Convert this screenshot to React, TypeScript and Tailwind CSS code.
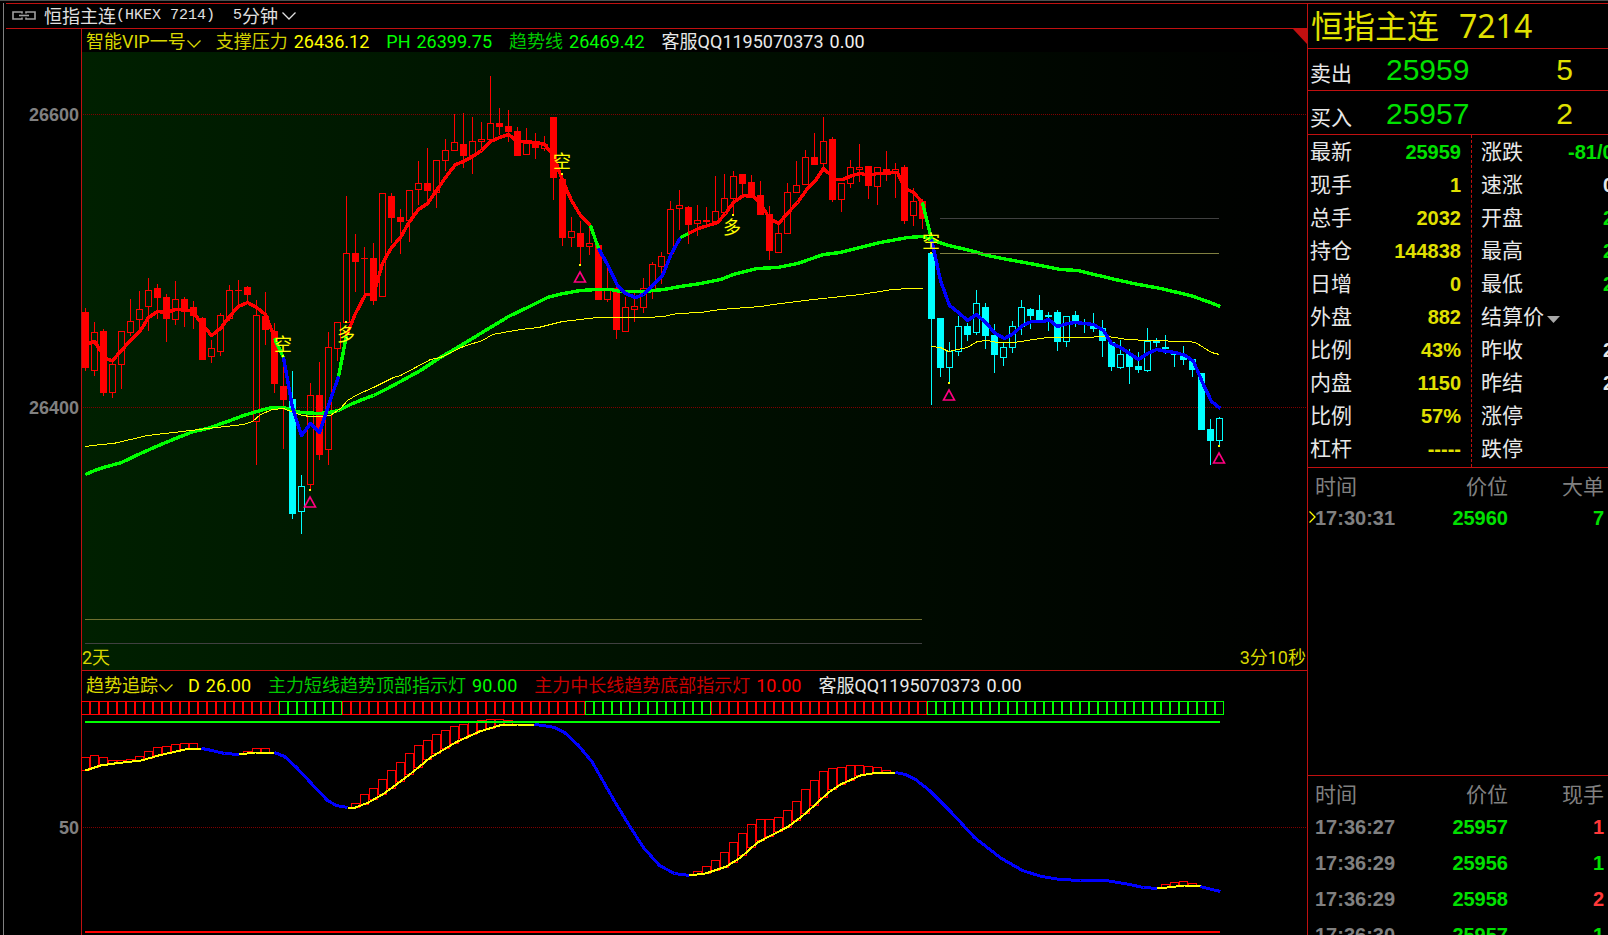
import clsx from 'clsx';

const UP = '#ff0000';
const DOWN = '#00ffff';
const FRAME = '#c01010';

// One bar every 9 units, the first one centred on 85
const STEP = 9;
const FIRST = 85;
const barX = (i: number) => FIRST + i * STEP;

// [kind, high, body top, body bottom, low], f = filled, h = hollow
type Candle = ['f' | 'h', number, number, number, number];

const CANDLES: Candle[] = [
  ['f', 308, 312, 368, 371], ['h', 322, 332, 370, 376], ['f', 329, 331, 393, 396],
  ['h', 361, 364, 392, 398], ['h', 331, 331, 364, 389], ['h', 299, 321, 332, 336],
  ['h', 291, 309, 319, 330], ['h', 278, 290, 306, 331], ['f', 284, 288, 298, 319],
  ['f', 294, 297, 319, 342], ['h', 281, 299, 319, 325], ['f', 297, 299, 309, 327],
  ['f', 301, 307, 316, 329], ['f', 317, 318, 360, 360], ['h', 340, 348, 356, 363],
  ['h', 313, 315, 351, 356], ['h', 285, 290, 318, 321], ['f', 280, 290, 291, 307],
  ['f', 286, 287, 295, 302], ['h', 300, 315, 421, 465], ['f', 292, 316, 330, 345],
  ['f', 323, 331, 384, 393], ['f', 367, 386, 400, 449], ['f', 371, 399, 514, 519],
  ['h', 475, 486, 511, 534], ['h', 383, 395, 484, 489], ['f', 362, 395, 455, 460],
  ['h', 332, 347, 449, 465], ['h', 322, 322, 348, 361], ['h', 196, 253, 322, 322],
  ['f', 234, 253, 262, 292], ['f', 247, 258, 259, 293], ['f', 243, 258, 301, 305],
  ['h', 193, 193, 296, 296], ['f', 193, 196, 218, 243], ['f', 209, 217, 222, 254],
  ['h', 190, 190, 220, 242], ['h', 161, 183, 189, 205], ['f', 148, 183, 191, 202],
  ['h', 160, 160, 192, 208], ['h', 139, 150, 160, 171], ['h', 114, 142, 150, 150],
  ['f', 113, 144, 156, 168], ['h', 117, 141, 155, 174], ['h', 122, 139, 141, 148],
  ['h', 76, 123, 139, 139], ['f', 108, 123, 127, 135], ['f', 110, 126, 132, 142],
  ['f', 127, 131, 156, 156], ['h', 128, 142, 154, 154], ['f', 133, 141, 148, 159],
  ['h', 136, 144, 148, 151], ['f', 117, 117, 178, 200], ['f', 175, 179, 238, 246],
  ['h', 217, 231, 237, 247], ['f', 221, 233, 247, 264], ['h', 227, 243, 246, 255],
  ['f', 245, 245, 300, 300], ['h', 267, 290, 299, 302], ['f', 287, 288, 330, 339],
  ['h', 297, 307, 331, 331], ['h', 292, 306, 309, 322], ['h', 278, 288, 307, 313],
  ['h', 262, 264, 289, 299], ['h', 252, 256, 266, 284], ['h', 201, 209, 253, 253],
  ['h', 190, 205, 208, 230], ['f', 206, 207, 225, 244], ['h', 205, 220, 223, 236],
  ['f', 207, 220, 222, 227], ['h', 176, 211, 221, 221], ['h', 174, 198, 212, 212],
  ['h', 171, 176, 198, 214], ['f', 174, 174, 184, 194], ['f', 175, 182, 197, 197],
  ['f', 181, 195, 215, 215], ['f', 206, 214, 251, 260], ['h', 222, 233, 252, 252],
  ['h', 183, 192, 233, 233], ['h', 161, 185, 192, 192], ['h', 150, 157, 184, 184],
  ['f', 133, 157, 165, 165], ['h', 117, 141, 163, 172], ['f', 137, 139, 200, 202],
  ['h', 183, 183, 199, 212], ['h', 160, 167, 183, 188], ['h', 144, 167, 169, 182],
  ['f', 166, 166, 186, 199], ['h', 167, 167, 186, 205], ['f', 151, 169, 174, 181],
  ['h', 163, 169, 172, 198], ['f', 165, 167, 221, 224], ['h', 188, 201, 215, 226],
  ['f', 199, 201, 219, 229], ['f', 253, 253, 319, 405], ['f', 318, 318, 368, 377],
  ['h', 342, 351, 367, 382], ['h', 316, 326, 351, 356], ['f', 323, 326, 335, 341],
  ['h', 290, 303, 332, 335], ['f', 303, 307, 336, 349], ['f', 324, 335, 355, 373],
  ['h', 342, 347, 357, 366], ['h', 321, 326, 347, 353], ['h', 300, 307, 326, 335],
  ['f', 308, 309, 316, 329], ['f', 295, 310, 322, 322], ['f', 312, 315, 317, 331],
  ['f', 310, 312, 342, 351], ['h', 316, 316, 341, 347], ['f', 311, 315, 322, 327],
  ['f', 319, 323, 324, 333], ['f', 313, 325, 329, 332], ['f', 320, 328, 341, 357],
  ['f', 340, 342, 367, 371], ['h', 340, 354, 367, 369], ['f', 349, 353, 367, 384],
  ['f', 352, 366, 370, 373], ['h', 328, 341, 370, 372], ['f', 338, 341, 343, 347],
  ['f', 335, 347, 349, 354], ['f', 352, 354, 355, 367], ['f', 346, 356, 360, 365],
  ['f', 359, 359, 370, 377], ['f', 373, 373, 430, 430], ['f', 419, 429, 441, 465],
  ['h', 417, 418, 440, 445],
];

const isDown = (i: number) => i === 23 || i === 24 || i >= 94;

const TREND =
  '85,474 94,470 103,467 121,462 140,453 158,445 175,438 193,431 207,428 227,421 243,415 260,410 272,407 283,407 293,410 300,412 319,413 328,412 338,410 350,404 362,399 373,395 387,388 400,381 420,370 438,358 457,347 480,333 508,316 527,307 547,297 563,293 580,290 597,289 610,289 620,291 643,291 663,289 680,286 700,283 720,279 733,274 757,268 777,267 797,263 823,254 840,252 860,247 880,242 907,237 922,236 930,239 948,245 970,250 987,255 1007,259 1040,265 1060,269 1077,270 1098,275 1110,278 1133,283 1160,288 1190,295 1207,301 1220,306';

const SUPPORT = [
  '85,446 100,444 113,443 147,435 173,432 207,428 243,424 252,421 260,414 272,409 283,408 293,412 302,415 310,416 323,416 330,415 340,408 347,400 357,394 373,387 393,377 400,375 430,359 440,357 463,346 482,340 492,334 520,329 538,327 562,321 597,317 647,317 663,316 677,313 700,312 720,309 760,306 780,303 813,299 860,294 880,291 892,289 910,288 922,288',
  '931,346 940,347 948,351 957,349 967,347 977,341 987,340 997,342 1013,342 1047,337 1080,337 1107,336 1127,339 1147,340 1187,341 1195,342 1203,347 1211,352 1219,354',
];

const AVERAGE: [string, string][] = [
  ['#ff0000', '88,343 94,341 100,350 107,359 112,360 121,350 130,340 140,330 148,317 157,311 166,312 175,309 192,310 198,319 211,335 220,328 229,316 238,306 247,302 256,307 265,314 274,337'],
  ['#00ff00', '274,338 283,357'],
  ['#0000ff', '283,357 292,407 301,435 310,423 319,432 328,405 338,376'],
  ['#00ff00', '338,376 346,335'],
  ['#ff0000', '346,335 355,313 365,294 373,294 382,263 391,247 400,237 409,221 418,209 427,203 436,190 445,177 455,164 463,161 472,156 481,150 490,141 499,137 508,134 517,141 537,142 544,144 553,155 562,180 571,200 580,215 590,225'],
  ['#00ff00', '590,225 598,248'],
  ['#0000ff', '598,248 607,264 617,285 625,293 635,297 643,294 653,284 662,275 671,253 680,237'],
  ['#00ff00', '680,237 688,233'],
  ['#ff0000', '688,233 698,228 717,222 725,213 733,202 743,195 753,196 760,203 769,218 778,223 787,213 797,202 807,188 815,180 823,168 835,179 842,179 852,175 860,173 868,175 877,173 897,172 902,183 907,189 913,192 922,202'],
  ['#00ff00', '922,202 931,239'],
  ['#0000ff', '931,239 940,280 949,305 958,312 967,320 976,314 985,322 995,333 1004,338 1013,333 1022,325 1031,321 1043,321 1048,319 1057,326 1067,323 1075,322 1093,324 1103,330 1111,343 1120,347 1129,353 1138,359 1147,353 1156,349 1167,351 1175,352 1185,355 1193,361 1202,382 1211,401 1220,408'],
];

const SIGNALS: [string, number, number][] = [
  ['空', 283, 351],
  ['多', 346, 341],
  ['空', 562, 168],
  ['多', 732, 234],
  ['空', 931, 248],
];

const DOTS = [
  [282, 355], [345, 321], [309, 489], [561, 173], [579, 264],
  [732, 214], [930, 252], [948, 382], [1218, 445],
];

const TRIANGLES = [[310, 497], [580, 272], [949, 390], [1219, 453]];

type Point = [number, number];

const TRACK: { color: string; points: Point[] }[] = [
  { color: '#ffff00', points: [[85, 770], [100, 765], [114, 763], [141, 760], [158, 755], [189, 748], [201, 748]] },
  { color: '#0000ff', points: [[201, 748], [207, 749], [224, 753], [239, 754]] },
  { color: '#ffff00', points: [[239, 754], [255, 752], [274, 752]] },
  { color: '#0000ff', points: [[274, 752], [284, 756], [296, 767], [310, 782], [327, 800], [336, 805], [347, 807]] },
  { color: '#ffff00', points: [[347, 807], [355, 807], [368, 802], [382, 794], [396, 784], [413, 771], [430, 757], [455, 742], [479, 731], [499, 725], [517, 724], [534, 724]] },
  { color: '#0000ff', points: [[534, 724], [543, 725], [554, 727], [564, 732], [578, 745], [592, 762], [605, 785], [616, 804], [630, 827], [643, 847], [659, 865], [674, 873], [689, 875]] },
  { color: '#ffff00', points: [[689, 875], [705, 873], [726, 866], [740, 857], [757, 842], [788, 826], [805, 813], [828, 792], [840, 784], [860, 775], [877, 772], [895, 772]] },
  { color: '#0000ff', points: [[895, 772], [905, 774], [915, 779], [929, 790], [950, 811], [974, 837], [1001, 858], [1022, 870], [1041, 876], [1060, 879], [1080, 880], [1105, 880], [1124, 883], [1143, 887], [1157, 888]] },
  { color: '#ffff00', points: [[1157, 888], [1167, 887], [1184, 885], [1192, 885], [1200, 886]] },
  { color: '#0000ff', points: [[1200, 886], [1207, 888], [1220, 891]] },
];

// Tops of the histogram bars, keyed by the index of the first bar of each run
const HISTOGRAM: { from: number; tops: number[] }[] = [
  { from: 0, tops: [757, 755, 757, 760, 760, 759, 756, 751, 747, 746, 744, 743, 743] },
  { from: 18, tops: [751, 748, 748] },
  { from: 30, tops: [803, 794, 788, 779, 770, 762, 753, 745, 740, 734, 730, 726, 724, 722, 720, 719, 719, 720] },
  { from: 68, tops: [871, 866, 860, 852, 842, 833, 824, 819, 819, 817, 810, 801, 789, 780, 771, 768, 767, 765, 765, 766, 767, 770] },
  { from: 120, tops: [884, 882, 881, 883] },
];

const STRIP: { from: number; to: number; color: string }[] = [
  { from: 0, to: 21, color: '#ff0000' },
  { from: 29, to: 55, color: '#ff0000' },
  { from: 70, to: 93, color: '#ff0000' },
  { from: 22, to: 28, color: '#00ff00' },
  { from: 56, to: 69, color: '#00ff00' },
  { from: 94, to: 126, color: '#00ff00' },
];

const TRACK_POINTS = TRACK.flatMap((s) => s.points);

function trackY(x: number) {
  for (let i = 1; i < TRACK_POINTS.length; i++) {
    const [x0, y0] = TRACK_POINTS[i - 1];
    const [x1, y1] = TRACK_POINTS[i];
    if (x <= x1 && x1 > x0) {
      return Math.round(y0 + ((x - x0) * (y1 - y0)) / (x1 - x0));
    }
  }
  return TRACK_POINTS[TRACK_POINTS.length - 1][1];
}

function Chevron() {
  return (
    <svg width="14" height="9" viewBox="0 0 14 9" fill="none" stroke="currentColor" aria-hidden="true">
      <path d="M0.5 1.5 L7 8 L13.5 1.5" strokeWidth="1.3" />
    </svg>
  );
}

function LinkIcon() {
  return (
    <svg width="24" height="9" viewBox="0 0 24 9" fill="none" stroke="#a0a0a0" aria-hidden="true">
      <path d="M10 2.5 V1 H1 V8 H10 V6.5 M14 2.5 V1 H23 V8 H14 V6.5" strokeWidth="1.6" />
      <path d="M7 4.5 H17" strokeWidth="1.6" />
    </svg>
  );
}

function PriceChart() {
  return (
    <svg viewBox="6 52 1301 618" className="block w-full h-auto" role="img" aria-label="恒指主连 5分钟">
      <defs>
        <linearGradient id="field" x1="0" x2="1" y1="0" y2="0">
          <stop offset="0" stopColor="#002000" />
          <stop offset="1" stopColor="#000000" />
        </linearGradient>
      </defs>
      <rect x="82" y="52" width="1225" height="618" fill="url(#field)" />
      <g shapeRendering="crispEdges">
        <rect x="81" y="52" width="1" height="618" fill={FRAME} />
        <g stroke="#800000" strokeDasharray="1 1">
          <line x1="83" x2="1307" y1="114.5" y2="114.5" />
          <line x1="83" x2="1307" y1="407.5" y2="407.5" />
        </g>

        {CANDLES.map(([kind, high, top, bottom, low], i) => {
          const x = barX(i);
          const color = isDown(i) ? DOWN : UP;
          return (
            <g key={i} fill={color}>
              {high < top && <rect x={x} y={high} width="1" height={top - high} />}
              {low > bottom && <rect x={x} y={bottom} width="1" height={low - bottom} />}
              {kind === 'f' ? (
                <rect x={x - 3} y={top} width="7" height={bottom - top} />
              ) : (
                <rect x={x - 2.5} y={top + 0.5} width="6" height={bottom - top} fill="none" stroke={color} />
              )}
            </g>
          );
        })}

        <g fill="none">
          <g transform="translate(0.5 0.5)">
            <polyline points={TREND} stroke="#00ff00" strokeWidth="3.4" strokeLinejoin="round" />
          </g>
          <line x1="940" x2="1219" y1="218.5" y2="218.5" stroke="#404040" />
          <line x1="940" x2="1219" y1="253.5" y2="253.5" stroke="#808040" />
          <line x1="85" x2="922" y1="619.5" y2="619.5" stroke="#707030" />
          <line x1="85" x2="922" y1="643.5" y2="643.5" stroke="#404040" />
          <g transform="translate(0.5 0.5)">
            {SUPPORT.map((points) => (
              <polyline key={points} points={points} stroke="#ffff00" />
            ))}
            {AVERAGE.map(([color, points]) => (
              <polyline key={points} points={points} stroke={color} strokeWidth="3.4" strokeLinejoin="round" />
            ))}
          </g>
        </g>

        {DOTS.map(([x, y]) => (
          <rect key={x} x={x} y={y} width="2" height="2" fill="#ffff00" />
        ))}
      </g>

      {TRIANGLES.map(([x, y]) => (
        <path key={x} d={`M${x} ${y} L${x + 5.5} ${y + 10} H${x - 5.5} Z`} fill="none" stroke="#ff0080" strokeWidth="1.6" />
      ))}

      <g fill="#ffff00" fontSize="18" textAnchor="middle" className="font-['Noto_Sans_CJK_SC',sans-serif]">
        {SIGNALS.map(([text, x, y]) => (
          <text key={x} x={x} y={y}>{text}</text>
        ))}
      </g>

      <g fill="#808080" fontSize="18" fontWeight="700" textAnchor="end" className="font-['Liberation_Sans',sans-serif]">
        <text x="79" y="121">26600</text>
        <text x="79" y="414">26400</text>
      </g>

      <g fill="#d8d800" fontSize="18" className="font-[Roboto,'Noto_Sans_CJK_SC',sans-serif]">
        <text x="82" y="664">2天</text>
        <text x="1306" y="664" textAnchor="end">3分10秒</text>
      </g>
    </svg>
  );
}

function TrackChart() {
  return (
    <svg viewBox="6 698 1301 237" className="block w-full h-auto" role="img" aria-label="趋势追踪">
      <g shapeRendering="crispEdges" fill="none">
        <rect x="81" y="698" width="1" height="237" fill={FRAME} />
        <line x1="83" x2="1307" y1="827.5" y2="827.5" stroke="#800000" strokeDasharray="1 1" />
        {STRIP.map(({ from, to, color }) =>
          Array.from({ length: to - from + 1 }, (_, n) => (
            <rect key={from + n} x={barX(from + n) - 3.5} y="701.5" width="8" height="13" stroke={color} />
          )),
        )}
        {HISTOGRAM.map(({ from, tops }) =>
          tops.map((top, n) => {
            const x = barX(from + n);
            return (
              <rect
                key={from + n}
                x={x - 3.5}
                y={top + 0.5}
                width="8"
                height={Math.max(1, trackY(x) - top)}
                stroke="#ff0000"
              />
            );
          }),
        )}
        <rect x="85" y="721" width="1135" height="2" fill="#00ff00" />
        <g transform="translate(0.5 0.5)">
          {TRACK.map(({ color, points }) => (
            <polyline
              key={points[0][0]}
              points={points.map((p) => p.join(',')).join(' ')}
              stroke={color}
              strokeWidth={color === '#0000ff' ? 3 : 2}
              strokeLinejoin="round"
            />
          ))}
        </g>
        <rect x="85" y="931" width="1135" height="2" fill="#ff0000" />
      </g>
      <text
        x="79"
        y="834"
        fill="#808080"
        fontSize="18"
        fontWeight="700"
        textAnchor="end"
        className="font-['Liberation_Sans',sans-serif]"
      >
        50
      </text>
    </svg>
  );
}

interface LegendItem {
  label: string;
  value: string;
  labelClass: string;
  valueClass: string;
}

const PRICE_LEGEND: LegendItem[] = [
  { label: '支撑压力', value: '26436.12', labelClass: 'text-[#d0d000]', valueClass: 'text-[#ffff00]' },
  { label: 'PH', value: '26399.75', labelClass: 'text-[#00ff00]', valueClass: 'text-[#00ff00]' },
  { label: '趋势线', value: '26469.42', labelClass: 'text-[#00c800]', valueClass: 'text-[#00ff00]' },
  { label: '客服QQ1195070373', value: '0.00', labelClass: 'text-[#e8e8e8]', valueClass: 'text-[#f0f0f0]' },
];

const TRACK_LEGEND: LegendItem[] = [
  { label: 'D', value: '26.00', labelClass: 'text-[#ffff00]', valueClass: 'text-[#ffff00]' },
  { label: '主力短线趋势顶部指示灯', value: '90.00', labelClass: 'text-[#00c800]', valueClass: 'text-[#00ff00]' },
  { label: '主力中长线趋势底部指示灯', value: '10.00', labelClass: 'text-[#c80000]', valueClass: 'text-[#ff0000]' },
  { label: '客服QQ1195070373', value: '0.00', labelClass: 'text-[#e8e8e8]', valueClass: 'text-[#f0f0f0]' },
];

function Legend({ name, items, className }: { name: string; items: LegendItem[]; className: string }) {
  return (
    <div
      className={clsx(
        "ml-[75px] flex items-center gap-[17px] overflow-hidden border-l border-[#c01010] pt-0.5 pl-1 text-[18px] leading-5 whitespace-nowrap font-[Roboto,'Noto_Sans_CJK_SC',sans-serif]",
        className,
      )}
    >
      <button type="button" className="-mr-0.5 flex items-center gap-px text-[#d8d800]">
        {name}
        <span className="pt-1">
          <Chevron />
        </span>
      </button>
      {items.map((item) => (
        <span key={item.label} className="flex gap-1.5">
          <span className={item.labelClass}>{item.label}</span>
          <span className={item.valueClass}>{item.value}</span>
        </span>
      ))}
    </div>
  );
}

const LEFT_STATS = [
  { label: '最新', value: '25959', color: 'text-[#00e000]' },
  { label: '现手', value: '1', color: 'text-[#e0e000]' },
  { label: '总手', value: '2032', color: 'text-[#e0e000]' },
  { label: '持仓', value: '144838', color: 'text-[#e0e000]' },
  { label: '日增', value: '0', color: 'text-[#e0e000]' },
  { label: '外盘', value: '882', color: 'text-[#e0e000]' },
  { label: '比例', value: '43%', color: 'text-[#e0e000]' },
  { label: '内盘', value: '1150', color: 'text-[#e0e000]' },
  { label: '比例', value: '57%', color: 'text-[#e0e000]' },
  { label: '杠杆', value: '-----', color: 'text-[#e0e000]' },
];

const RIGHT_STATS = [
  { label: '涨跌', value: '-81/0', color: 'text-[#00e000]', width: 'w-[91px]' },
  { label: '速涨', value: '0', color: 'text-[#e8e8e8]', width: 'w-[56px]' },
  { label: '开盘', value: '2', color: 'text-[#00e000]', width: 'w-[56px]' },
  { label: '最高', value: '2', color: 'text-[#00e000]', width: 'w-[56px]' },
  { label: '最低', value: '2', color: 'text-[#00e000]', width: 'w-[56px]' },
  { label: '结算价', value: '', color: '', width: 'w-[56px]' },
  { label: '昨收', value: '2', color: 'text-[#e8e8e8]', width: 'w-[56px]' },
  { label: '昨结', value: '2', color: 'text-[#e8e8e8]', width: 'w-[56px]' },
  { label: '涨停', value: '', color: '', width: 'w-[56px]' },
  { label: '跌停', value: '', color: '', width: 'w-[56px]' },
];

interface Tick {
  time: string;
  price: string;
  lots: string;
  color: string;
  marked?: boolean;
}

const BIG_ORDERS: Tick[] = [
  { time: '17:30:31', price: '25960', lots: '7', color: 'text-[#00e000]', marked: true },
];

const TICKS: Tick[] = [
  { time: '17:36:27', price: '25957', lots: '1', color: 'text-[#ff3838]' },
  { time: '17:36:29', price: '25956', lots: '1', color: 'text-[#00e000]' },
  { time: '17:36:29', price: '25958', lots: '2', color: 'text-[#ff3838]' },
  { time: '17:36:30', price: '25957', lots: '1', color: 'text-[#00e000]' },
];

function TickTable({ lotsLabel, rows, rowClass }: { lotsLabel: string; rows: Tick[]; rowClass: string }) {
  return (
    <table className="w-full table-fixed text-[#808080]">
      <thead>
        <tr className="h-[33px] text-[21px] leading-6">
          <th className="pl-[7px] text-left font-normal">时间</th>
          <th className="w-[96px] text-right font-normal">价位</th>
          <th className="w-[100px] pr-1 text-right font-normal">{lotsLabel}</th>
        </tr>
      </thead>
      <tbody className="font-['Liberation_Sans',sans-serif] text-xl leading-6 font-bold">
        {rows.map((row, i) => (
          <tr key={i} className={rowClass}>
            <td className="relative pl-[7px]">
              {row.marked && (
                <svg width="7" height="12" viewBox="0 0 7 12" className="absolute top-2.5 left-px" aria-hidden="true">
                  <path d="M0.5 0.5 L6 6 L0.5 11.5" fill="none" stroke="#ffff00" strokeWidth="1.3" />
                </svg>
              )}
              {row.time}
            </td>
            <td className="text-right text-[#00e000]">{row.price}</td>
            <td className={clsx('pr-1 text-right', row.color)}>{row.lots}</td>
          </tr>
        ))}
      </tbody>
    </table>
  );
}

function QuoteRow({ label, price, lots, className }: { label: string; price: string; lots: string; className: string }) {
  return (
    <div className={clsx('flex items-center border-b border-[#c01010] pl-0.5', className)}>
      <span className="w-[76px] pt-1 text-[21px] leading-7">{label}</span>
      <span className="font-['Liberation_Sans',sans-serif] text-3xl leading-8 text-[#00e000]">{price}</span>
      <span className="ml-auto pr-[35px] font-['Liberation_Sans',sans-serif] text-3xl leading-8 text-[#e0e000]">
        {lots}
      </span>
    </div>
  );
}

function QuotePanel() {
  return (
    <aside className="w-[301px] shrink-0 overflow-hidden border-l border-[#c01010] font-['Noto_Sans_CJK_SC',sans-serif] text-[#e8e8e8]">
      <h1 className="flex h-[45px] items-center gap-5 border-b border-[#c01010] pl-[3px] text-[32px] leading-10 text-[#e0e000]">
        <span className="pb-1">恒指主连</span>
        <span className="font-['Noto_Sans',sans-serif]">7214</span>
      </h1>
      <QuoteRow label="卖出" price="25959" lots="5" className="h-[42px]" />
      <QuoteRow label="买入" price="25957" lots="2" className="h-[44px] pt-0.5" />

      <div className="flex h-[333px] border-b border-[#c01010]">
        <dl className="w-[163px] shrink-0 pr-2.5 pl-0.5">
          {LEFT_STATS.map((s, i) => (
            <div key={i} className="flex h-[33px] items-center justify-between">
              <dt className="pb-1 text-[21px] leading-7">{s.label}</dt>
              <dd className={clsx("font-['Liberation_Sans',sans-serif] text-xl leading-7 font-bold", s.color)}>{s.value}</dd>
            </div>
          ))}
        </dl>
        <dl className="shrink-0 border-l border-dashed border-[#c01010] pl-[9px]">
          {RIGHT_STATS.map((s, i) => (
            <div key={i} className="flex h-[33px] w-[178px] items-center justify-between">
              <dt className="pb-1 text-[21px] leading-7">
                {s.label === '结算价' ? (
                  <button type="button" className="flex items-center gap-[3px]">
                    {s.label}
                    <svg width="13" height="7" viewBox="0 0 13 7" className="mt-2.5" aria-hidden="true">
                      <path d="M0 0 H13 L6.5 7 Z" fill="#a8a8a8" />
                    </svg>
                  </button>
                ) : (
                  s.label
                )}
              </dt>
              <dd className={clsx("font-['Liberation_Sans',sans-serif] text-xl leading-7 font-bold", s.width, s.color)}>
                {s.value}
              </dd>
            </div>
          ))}
        </dl>
      </div>

      <section className="h-[308px] border-b border-[#c01010]">
        <TickTable lotsLabel="大单" rows={BIG_ORDERS} rowClass="h-[33px]" />
      </section>
      <section>
        <TickTable lotsLabel="现手" rows={TICKS} rowClass="h-9" />
      </section>
    </aside>
  );
}

export default function App() {
  return (
    <div className="h-screen overflow-hidden border-t border-[#505050] bg-black pt-0.5 pl-[3px]">
      <div className="h-full border-l border-[#808080] pl-0.5">
        <div className="flex h-full border-t border-[#c01010]">
          <main className="min-w-0 flex-1">
            <header className="flex h-[25px] items-center gap-2 border-b border-[#c01010] pb-0.5 pl-1.5 text-[18px] leading-5 whitespace-nowrap text-[#e0e0e0] font-['Noto_Sans_CJK_SC',sans-serif]">
              <LinkIcon />
              <span className="flex items-center">
                恒指主连
                <span className="pt-0.5 font-['Liberation_Mono',monospace] text-[15px]">(HKEX 7214)</span>
              </span>
              <button type="button" className="ml-2.5 flex items-center gap-1">
                <span className="flex items-center">
                  <span className="pt-0.5 font-['Liberation_Mono',monospace] text-[15px]">5</span>分钟
                </span>
                <Chevron />
              </button>
            </header>

            <section className="relative">
              <Legend name="智能VIP一号" items={PRICE_LEGEND} className="h-[23px]" />
              {/* folded corner */}
              <svg width="14" height="15" viewBox="0 0 14 15" className="absolute top-0 right-0" aria-hidden="true">
                <path d="M0 0 H14 V15 Z" fill={FRAME} />
              </svg>
              <PriceChart />
            </section>

            <section>
              <div className="ml-[75px] border-t border-[#c01010]" />
              <Legend name="趋势追踪" items={TRACK_LEGEND} className="h-[27px]" />
              <TrackChart />
            </section>
          </main>
          <QuotePanel />
        </div>
      </div>
    </div>
  );
}
